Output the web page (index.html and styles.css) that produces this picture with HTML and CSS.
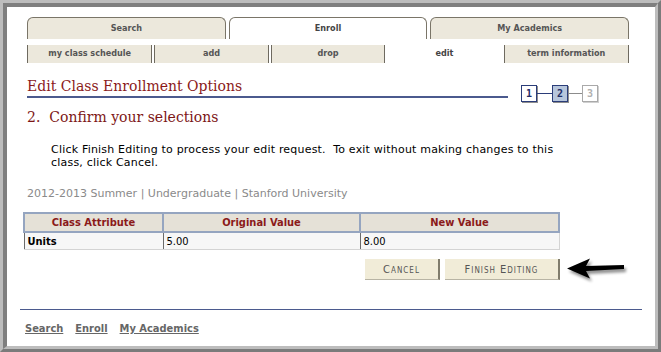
FILE: index.html
```html
<!DOCTYPE html>
<html lang="en">
<head>
  <meta charset="UTF-8">
  <title>Edit Class Enrollment Options</title>
  <link rel="stylesheet" href="styles.css">
</head>
<body>

  <div class="frame">
    <div class="window">

      <div class="tabs">
        <a class="tab" href="#">Search</a>
        <a class="tab active" href="#">Enroll</a>
        <a class="tab" href="#">My Academics</a>
      </div>

      <div class="subtabs">
        <a class="subtab st-wide" href="#">my class schedule</a>
        <a class="subtab" href="#">add</a>
        <a class="subtab" href="#">drop</a>
        <a class="subtab active" href="#">edit</a>
        <a class="subtab st-wide" href="#">term information</a>
      </div>

      <div class="title-row">
        <h1 class="title">Edit Class Enrollment Options</h1>
        <div class="steps">
          <span class="step done">1</span>
          <span class="link"></span>
          <span class="step current">2</span>
          <span class="link off"></span>
          <span class="step todo">3</span>
        </div>
      </div>

      <h2 class="step-title">2.&nbsp; Confirm your selections</h2>

      <p class="intro">Click Finish Editing to process your edit request.&nbsp; To exit without making changes to this class, click Cancel.</p>

      <div class="term">2012-2013 Summer | Undergraduate | Stanford University</div>

      <table class="values">
        <tr>
          <th class="c1">Class Attribute</th>
          <th class="c2">Original Value</th>
          <th class="c3">New Value</th>
        </tr>
        <tr>
          <td class="attr">Units</td>
          <td>5.00</td>
          <td>8.00</td>
        </tr>
      </table>

      <div class="actions">
        <button class="btn btn-cancel">Cancel</button>
        <button class="btn btn-finish">Finish Editing</button>
        <!-- annotation arrow -->
        <svg class="arrow" width="66" height="32" viewBox="0 0 66 32">
          <defs>
            <filter id="sh" x="-20%" y="-40%" width="150%" height="200%">
              <feGaussianBlur in="SourceAlpha" stdDeviation="1.4"/>
              <feOffset dx="2" dy="3"/>
              <feComponentTransfer><feFuncA type="linear" slope="0.45"/></feComponentTransfer>
              <feMerge><feMergeNode/><feMergeNode in="SourceGraphic"/></feMerge>
            </filter>
          </defs>
          <path filter="url(#sh)" d="M2 13.5 L25 3.5 L21 11 L59 10 L59 14 L21 16 L25 23.5 Z" fill="#000"/>
        </svg>
      </div>

      <div class="footer">
        <a href="#">Search</a>
        <a href="#">Enroll</a>
        <a href="#">My Academics</a>
      </div>

    </div>
  </div>

</body>
</html>
```

FILE: styles.css
```css
body {
  margin: 0;
  background: #fff;
  font-family: "DejaVu Sans", sans-serif;
  color: #000;
}

.frame {
  width: 661px;
  height: 352px;
  box-sizing: border-box;
  border: 3px solid;
  border-color: #bdbdbd #7b7b7b #7b7b7b #bdbdbd;
}

.window {
  height: 100%;
  box-sizing: border-box;
  border-style: solid;
  border-width: 4px 3px 3px 4px;
  border-color: #7f7f7f #bdbdbd #bdbdbd #7f7f7f;
  background: #fff;
  padding: 10px 26px 0 20px;
  position: relative;
}

/* top tabs */
.tabs {
  display: flex;
  gap: 3px;
  height: 22px;
}

.tab {
  flex: 1;
  box-sizing: border-box;
  border: 1px solid #7a7568;
  border-bottom: none;
  border-radius: 6px 6px 0 0;
  background: #ece8dc;
  color: #555;
  font-family: "DejaVu Sans Condensed", "DejaVu Sans", sans-serif;
  font-size: 9px;
  font-weight: bold;
  text-align: center;
  line-height: 21px;
  text-decoration: none;
}

.tab.active {
  background: #fff;
  color: #444;
}

/* sub tabs */
.subtabs {
  display: flex;
  gap: 2px;
  margin-top: 6px;
  height: 18px;
}

.subtab {
  flex: 113;
  box-sizing: border-box;
  border-left: 1px solid #6e6a60;
  border-right: 1px solid #6e6a60;
  background: #ece8dc;
  color: #555;
  font-family: "DejaVu Sans Condensed", "DejaVu Sans", sans-serif;
  font-size: 9px;
  font-weight: bold;
  text-align: center;
  line-height: 17px;
  text-decoration: none;
}

.subtab.st-wide {
  flex: 124;
}

.subtab.active {
  background: #fff;
  border-color: #fff;
  color: #444;
}

/* page title */
.title-row {
  display: flex;
  align-items: flex-start;
  margin-top: 15px;
}

.title {
  flex: 1;
  margin: 0 13px 0 0;
  padding-bottom: 1px;
  border-bottom: 2px solid #4b5a8e;
  font-family: "DejaVu Serif", serif;
  font-size: 14px;
  line-height: 17px;
  font-weight: normal;
  color: #8b1a1a;
}

.steps {
  display: flex;
  align-items: center;
  margin: 7px 31px -7px 0;
  height: 17px;
}

.step {
  width: 16px;
  height: 17px;
  box-sizing: border-box;
  border: 1px solid #2b3d79;
  box-shadow: 1px 1px 0 #8e8e8e;
  font-family: "DejaVu Sans Mono", monospace;
  font-size: 10px;
  font-weight: bold;
  line-height: 15px;
  text-align: center;
  color: #1e2d66;
}

.step.done {
  background: #fff;
}

.step.current {
  background: #b7c6dc;
}

.step.todo {
  border-color: #a9a9a9;
  color: #b0b0b0;
  box-shadow: 1px 1px 0 #d0d0d0;
}

.link {
  width: 15px;
  height: 1px;
  background: #2b3d79;
}

.link.off {
  width: 14px;
  background: #8c8c8c;
}

.step-title {
  margin: 10px 0 0;
  font-family: "DejaVu Serif", serif;
  font-size: 14px;
  line-height: 19px;
  font-weight: normal;
  color: #7d1616;
}

.intro {
  margin: 16px 0 0;
  padding: 0 52px 0 24px;
  font-size: 11px;
  line-height: 13px;
  letter-spacing: 0.2px;
}

.term {
  margin-top: 18px;
  font-size: 11px;
  line-height: 13px;
  color: #8a8a8a;
}

/* values table */
.values {
  margin: 12px 0 0 -4px;
  width: 537px;
  border-collapse: collapse;
  font-family: "DejaVu Sans Condensed", "DejaVu Sans", sans-serif;
  font-size: 11px;
}

.values th {
  height: 19px;
  padding: 0;
  box-sizing: border-box;
  background: #e5e1d7;
  border: 2px solid #95a5c0;
  color: #8b1a1a;
  font-weight: bold;
}

.values th.c1 { width: 139px; }
.values th.c2 { width: 197px; }

.values td {
  height: 16px;
  padding: 0 0 0 3px;
  background: #f7f7f7;
  border-left: 1px solid #6b6b6b;
  border-bottom: 1px solid #d4d4d4;
}

.values td:last-child {
  border-right: 1px solid #d4d4d4;
}

.values td.attr {
  font-weight: bold;
}

/* buttons */
.actions {
  position: relative;
  width: 533px;
  display: flex;
  justify-content: flex-end;
  gap: 5px;
  margin-top: 9px;
}

.btn {
  height: 21px;
  padding: 0;
  background: #f1ecd8;
  border: none;
  border-right: 2px solid #807c6c;
  border-bottom: 1px solid #b8b4a4;
  color: #555;
  font-family: "DejaVu Sans Condensed", "DejaVu Sans", sans-serif;
  font-size: 11px;
  font-variant: small-caps;
  letter-spacing: 1px;
}

.btn-cancel { width: 75px; }
.btn-finish { width: 115px; }

.arrow {
  position: absolute;
  left: 538px;
  top: -4px;
}

/* footer */
.footer {
  margin: 29px -13px 0 -7px;
  padding: 12px 0 0 5px;
  border-top: 1px solid #4b5a8e;
  display: flex;
  gap: 12px;
  font-family: "DejaVu Sans Condensed", "DejaVu Sans", sans-serif;
  font-size: 11px;
  line-height: 13px;
}

.footer a {
  color: #666;
  font-weight: bold;
}
```
